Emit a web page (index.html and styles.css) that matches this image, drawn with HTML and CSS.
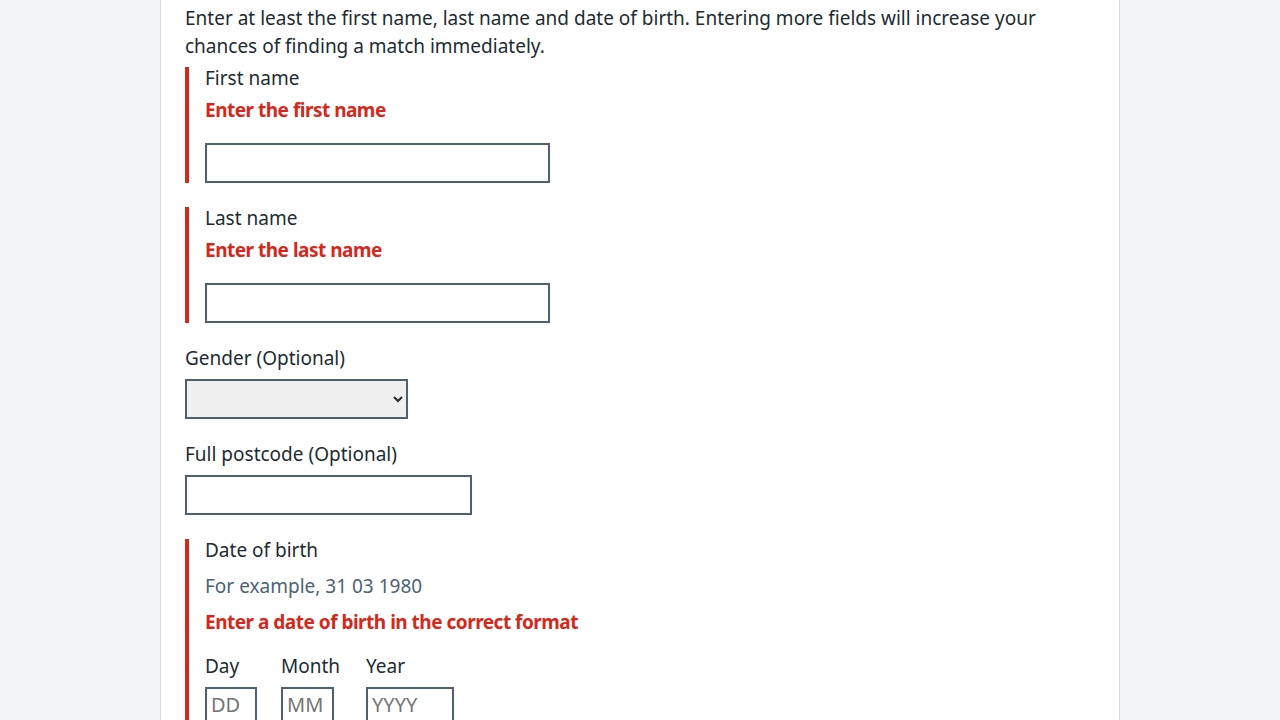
FILE: index.html
```html
<!DOCTYPE html>
<html lang="en">
<head>
<meta charset="utf-8">
<title>Find a patient</title>
<link rel="stylesheet" href="styles.css">
</head>
<body>
<main class="panel">
  <p class="intro">Enter at least the first name, last name and date of birth. Entering more fields will increase your chances of finding a match immediately.</p>

  <div class="group group-error">
    <label class="label" for="first">First name</label>
    <span class="error-msg">Enter the first name</span>
    <input class="input w-first" id="first" type="text">
  </div>

  <div class="group group-error">
    <label class="label" for="last">Last name</label>
    <span class="error-msg">Enter the last name</span>
    <input class="input w-first" id="last" type="text">
  </div>

  <div class="group">
    <label class="label" for="gender">Gender (Optional)</label>
    <select class="select" id="gender">
      <option></option>
      <option>Female</option>
      <option>Male</option>
    </select>
  </div>

  <div class="group">
    <label class="label" for="postcode">Full postcode (Optional)</label>
    <input class="input w-post" id="postcode" type="text">
  </div>

  <div class="group group-error">
    <fieldset class="fieldset">
      <legend class="legend">Date of birth</legend>
      <div class="hint">For example, 31 03 1980</div>
      <span class="error-msg">Enter a date of birth in the correct format</span>
      <div class="date">
        <div class="date-item">
          <label class="label date-label" for="dd">Day</label>
          <input class="input date-input w-day" id="dd" type="text" placeholder="DD">
        </div>
        <div class="date-item date-item-month">
          <label class="label date-label" for="mm">Month</label>
          <input class="input date-input w-month" id="mm" type="text" placeholder="MM">
        </div>
        <div class="date-item">
          <label class="label date-label" for="yy">Year</label>
          <input class="input date-input w-year" id="yy" type="text" placeholder="YYYY">
        </div>
      </div>
    </fieldset>
  </div>
</main>
</body>
</html>
```

FILE: styles.css
```css
html, body {
  margin: 0;
  padding: 0;
  background: #f0f4f5;
  height: 100%;
  overflow: hidden;
}

body {
  font-family: "Noto Sans", "Liberation Sans", sans-serif;
  font-size: 19px;
  line-height: 28px;
  color: #212b32;
}

.panel {
  box-sizing: border-box;
  width: 960px;
  min-height: 100%;
  margin: 0 auto;
  background: #ffffff;
  border-left: 1px solid #d8dde0;
  border-right: 1px solid #d8dde0;
  padding: 4px 24px 24px;
}

.intro {
  margin: 0 0 7px;
}

.group {
  margin-bottom: 24px;
}

.group-error {
  border-left: 4px solid #d5281b;
  padding-left: 16px;
}

/* single-line text: 28px tall box with the glyphs sitting a little higher,
   as in the reference typeface */
.label,
.legend,
.hint,
.error-msg {
  line-height: 22px;
  padding-bottom: 6px;
}

.label {
  display: block;
  margin-bottom: 4px;
}

.error-msg {
  display: block;
  color: #d5281b;
  font-weight: 700;
  letter-spacing: -0.5px;
  margin-bottom: 16px;
}

.input {
  display: block;
  box-sizing: border-box;
  height: 40px;
  margin: 0;
  padding: 4px;
  border: 2px solid #4c6272;
  border-radius: 0;
  background: #ffffff;
  font: inherit;
  color: #212b32;
}

.w-first { width: 345px; }
.w-post { width: 287px; }

.select {
  display: block;
  box-sizing: border-box;
  width: 223px;
  height: 40px;
  margin: 0;
  border: 2px solid #4c6272;
  border-radius: 0;
  background: #efefef;
  font: inherit;
  color: #212b32;
}

.fieldset {
  margin: 0;
  padding: 0;
  border: 0;
  min-width: 0;
}

.legend {
  padding-top: 0;
  padding-left: 0;
  padding-right: 0;
  margin-bottom: 8px;
}

.hint {
  color: #4c6272;
  margin-bottom: 8px;
}

.date {
  display: flex;
  align-items: flex-start;
}

.date-item {
  margin-right: 24px;
}

.date-item-month {
  min-width: 61px;
}

.date-label {
  margin-bottom: 4px;
}

.date-input {
  padding: 2px 4px 8px;
  font-size: 20px;
}

.date-input::placeholder {
  color: #757575;
}

.w-day { width: 52px; }
.w-month { width: 53px; }
.w-year { width: 88px; }
```
